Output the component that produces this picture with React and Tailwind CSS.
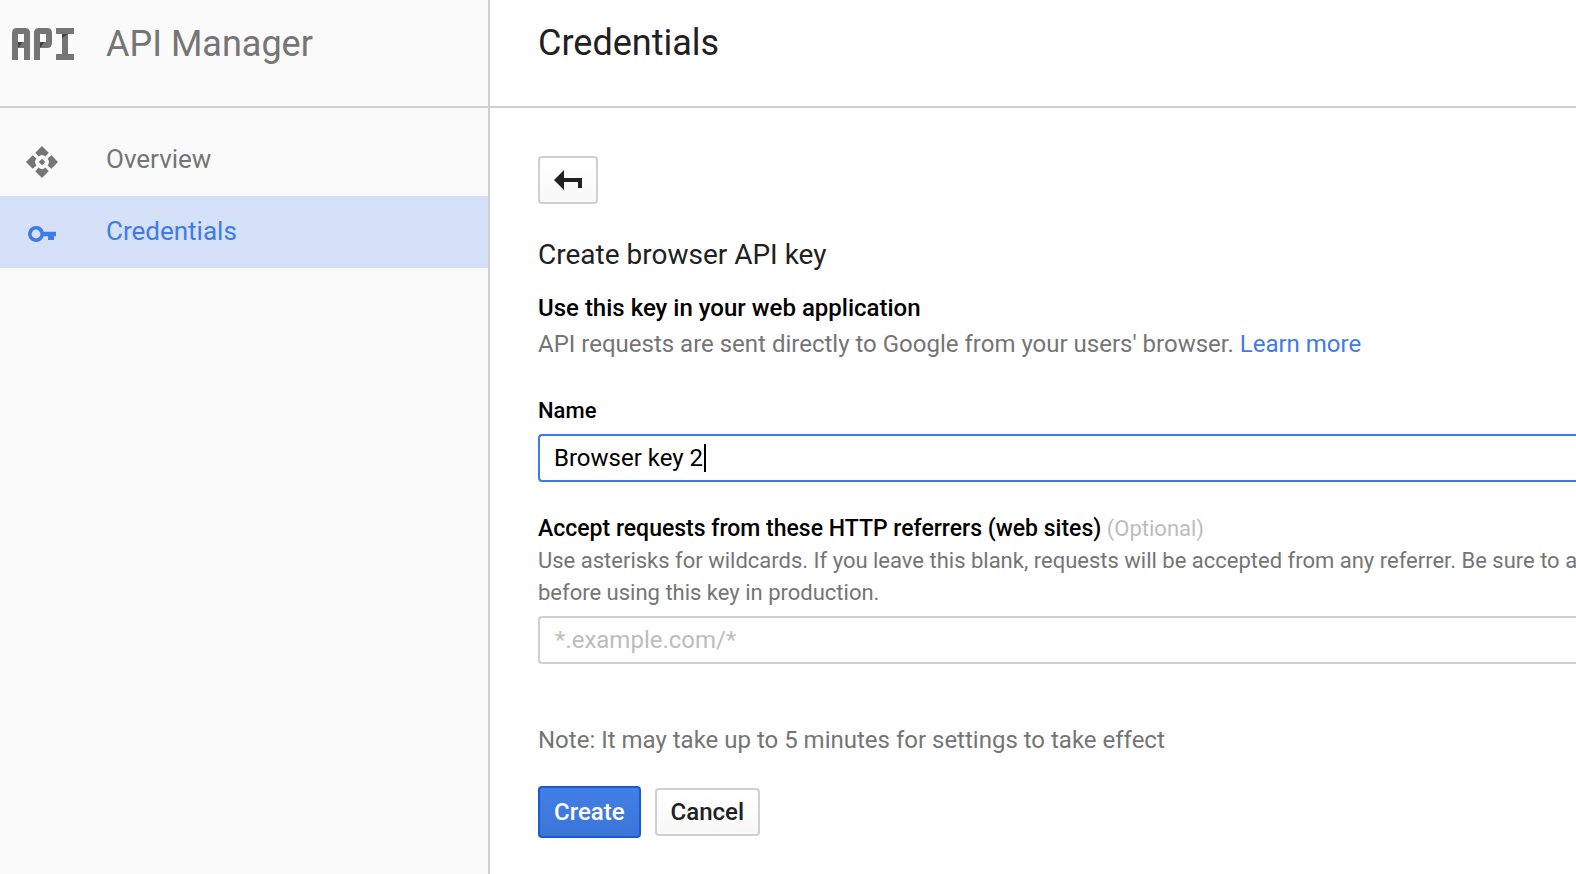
import React from "react";

function ApiLogo() {
  return (
    <svg width="62" height="32" viewBox="0 0 62 32" aria-hidden="true" className="shrink-0">
      <g fill="#757575" fillRule="evenodd">
        <path d="M0 5Q0 0 5 0H13Q18 0 18 5V32H12V20H6V32H0ZM6 6V14H12V6Z" />
        <path d="M22 5Q22 0 27 0H35Q40 0 40 5V14.500Q40 20 35 20H28V32H22ZM28 6V14H34V6Z" />
        <path d="M44 0H62V6H56V26H62V32H44V26H50V6H44Z" />
      </g>
      <g fill="#424242">
        <path d="M6 14H10.500L6 20Z" />
        <path d="M28 14H32.500L28 20Z" />
        <path d="M50 6H56L50 10Z" />
      </g>
    </svg>
  );
}

function OverviewIcon() {
  return (
    <svg width="32" height="32" viewBox="0 0 32 32" fill="currentColor" aria-hidden="true">
      <path d="M16 0 22.700 6.700 19.500 10.500Q16 7.500 12.500 10.500L9.300 6.700Z" />
      <path d="M16 32 22.700 25.300 19.500 21.500Q16 24.500 12.500 21.500L9.300 25.300Z" />
      <path d="M0 16 6.700 9.300 10.500 12.500Q7.500 16 10.500 19.500L6.700 22.700Z" />
      <path d="M32 16 25.300 9.300 21.500 12.500Q24.500 16 21.500 19.500L25.300 22.700Z" />
      <path d="M16 12.800 19.200 16 16 19.200 12.800 16Z" />
    </svg>
  );
}

function KeyIcon() {
  return (
    <svg width="32" height="32" viewBox="0 0 32 32" fill="currentColor" aria-hidden="true">
      <path
        fillRule="evenodd"
        d="M10 8A8 8 0 1 0 17.700 18.200H22V22H28V18.200H30V13.800H17.700A8 8 0 0 0 10 8ZM10 11.600A4.400 4.400 0 1 1 10 20.400 4.400 4.400 0 0 1 10 11.600Z"
      />
    </svg>
  );
}

function BackIcon() {
  return (
    <svg width="28" height="20" viewBox="0 0 28 20" fill="currentColor" aria-hidden="true">
      <path d="M0 10 10 0V8H28V18H24V12H10V20Z" />
    </svg>
  );
}

function NavItem({ icon, label, active }) {
  return (
    <li>
      <a
        href="#"
        aria-current={active ? "page" : undefined}
        className={
          active
            ? "flex h-[72px] items-center gap-12 bg-[#d5e1f8] pl-[26px] text-[#3f7be8]"
            : "flex h-[72px] items-center gap-12 pl-[26px] text-[#757575]"
        }
      >
        <span className="pt-1">{icon}</span>
        <span className="pb-0.5 text-[26px] leading-8">{label}</span>
      </a>
    </li>
  );
}

export default function App() {
  return (
    <div className="flex min-h-screen overflow-hidden bg-white font-[Roboto,sans-serif] text-[#212121]">
      <aside className="w-[490px] shrink-0 border-r-2 border-[#d0d0d0] bg-[#fafafa]">
        <div className="flex h-[108px] items-start gap-8 border-b-2 border-[#d0d0d0] pt-6 pl-3">
          <span className="pt-1">
            <ApiLogo />
          </span>
          <span className="text-[36px] leading-10 text-[#757575]">API Manager</span>
        </div>
        <nav className="pt-4">
          <ul>
            <NavItem icon={<OverviewIcon />} label="Overview" />
            <NavItem icon={<KeyIcon />} label="Credentials" active />
          </ul>
        </nav>
      </aside>

      <main className="min-w-0 flex-1">
        <header className="h-[108px] border-b-2 border-[#d0d0d0] pt-[23px] pl-12">
          <h1 className="text-[36px] leading-10">Credentials</h1>
        </header>

        <form className="pt-12 pl-12" onSubmit={(e) => e.preventDefault()}>
          <button
            type="button"
            aria-label="Back"
            className="flex h-12 w-[60px] items-center justify-center rounded border-2 border-[#d0d0d0] bg-linear-to-b from-white to-[#f8f8f8]"
          >
            <BackIcon />
          </button>

          <h2 className="mt-[33px] text-[28px] leading-9">Create browser API key</h2>
          <p className="mt-[17px] text-2xl leading-9 font-medium text-black">
            Use this key in your web application
          </p>
          <p className="text-2xl leading-9 whitespace-nowrap text-[#757575]">
            API requests are sent directly to Google from your users' browser.{" "}
            <a href="#" className="text-[#3f7be8]">
              Learn more
            </a>
          </p>

          <label htmlFor="key-name" className="mt-[33px] block text-[22px] leading-8 font-medium text-black">
            Name
          </label>
          <div className="relative mt-[7px]">
            <input
              id="key-name"
              type="text"
              defaultValue="Browser key 2"
              className="block h-12 w-full rounded-l border-2 border-r-0 border-[#3f7be8] bg-white px-[14px] text-2xl text-black caret-transparent outline-none"
            />
            <span className="absolute top-[10px] left-[166px] h-7 w-[2px] bg-black" aria-hidden="true" />
          </div>

          <div className="mt-[31px] text-[22px] leading-8 whitespace-nowrap">
            <label htmlFor="referrers" className="text-[23px] font-medium text-black">
              Accept requests from these HTTP referrers (web sites)
            </label>{" "}
            <span className="text-[#bdbdbd]">(Optional)</span>
            <p className="text-[#757575]">
              Use asterisks for wildcards. If you leave this blank, requests will be accepted from any
              referrer. Be sure to add referrers
              <br />
              before using this key in production.
            </p>
          </div>
          <input
            id="referrers"
            type="text"
            placeholder="*.example.com/*"
            className="mt-[7px] block h-12 w-full rounded-l border-2 border-r-0 border-[#d0d0d0] bg-white px-[15px] text-2xl outline-none placeholder:text-[#bdbdbd]"
          />

          <p className="mt-14 text-2xl leading-10 text-[#757575]">
            Note: It may take up to 5 minutes for settings to take effect
          </p>
          <div className="mt-[26px] flex items-center gap-[14px]">
            <button
              type="submit"
              className="h-[52px] rounded border-2 border-[#1a5acb] bg-linear-to-b from-[#427fe6] to-[#3b75d9] px-[14px] text-2xl font-medium text-white"
            >
              Create
            </button>
            <button
              type="button"
              className="h-12 rounded border-2 border-[#d0d0d0] bg-linear-to-b from-white to-[#f8f8f8] px-[14px] text-2xl font-medium"
            >
              Cancel
            </button>
          </div>
        </form>
      </main>
    </div>
  );
}
